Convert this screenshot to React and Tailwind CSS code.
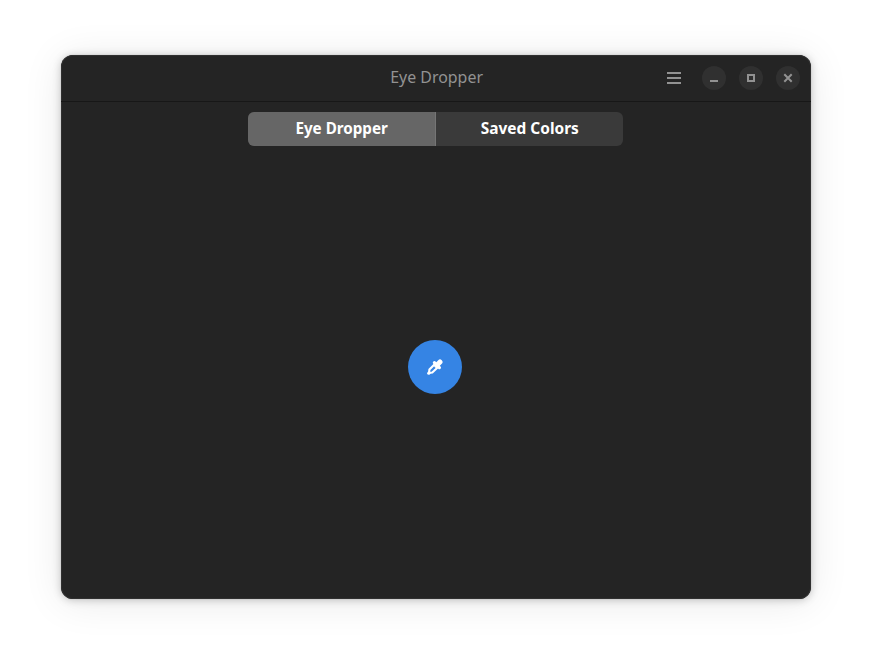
function Dropper() {
  return (
    <svg className="block size-4" viewBox="0 0 16 16" fill="none">
      <path d="M7.4 5.4 L2.4 10.6 L2 13.9 L5.3 13.5 L10.6 8.6" stroke="#fff" strokeWidth="2.1" strokeLinejoin="round" />
      <path d="M7.4 3.6 L12.4 8.6" stroke="#fff" strokeWidth="3.2" strokeLinecap="round" />
      <path d="M9.6 6.4 L13 3" stroke="#fff" strokeWidth="5" strokeLinecap="round" />
      <circle cx="1.8" cy="14.2" r="1.6" fill="#fff" />
    </svg>
  );
}

function WindowButton({ children }) {
  return (
    <button className="flex size-6 items-center justify-center rounded-full bg-[#303030]">
      <svg className="block size-2 overflow-visible" viewBox="0 0 8 8" fill="none" stroke="#929292" strokeWidth="2">
        {children}
      </svg>
    </button>
  );
}

export default function App() {
  return (
    <div className="h-[666px] w-[872px] overflow-hidden bg-white pl-[61px] pt-[55px] font-['Noto_Sans',sans-serif]">
      <div className="flex h-[544px] w-[750px] flex-col overflow-hidden rounded-[12px] bg-[#242424] shadow-[inset_0_0_0_1px_#303030,0_0_1px_rgba(0,0,0,0.3),0_1px_8px_rgba(0,0,0,0.22),0_3px_40px_rgba(0,0,0,0.09)]">
        <header className="grid h-[47px] shrink-0 grid-cols-[1fr_auto_1fr] border-b border-[#171717]">
          <div />
          <h1 className="flex h-[43px] w-[94px] items-center justify-center whitespace-nowrap pl-px text-[16px] text-[#929292]">
            <span className="scale-x-[0.995]">Eye Dropper</span>
          </h1>
          <div className="flex h-[46px] items-center justify-end pr-[11px]">
            <button className="mr-[21px] flex h-3 w-3.5 flex-col justify-between">
              <span className="h-0.5 w-full bg-[#929292]" />
              <span className="h-0.5 w-full bg-[#929292]" />
              <span className="h-0.5 w-full bg-[#929292]" />
            </button>
            <div className="flex gap-[13px]">
              <WindowButton><path d="M0 7H8" /></WindowButton>
              <WindowButton><path d="M1 1H7V7H1Z" /></WindowButton>
              <WindowButton><path d="M0.3 0.3L7.7 7.7M7.7 0.3L0.3 7.7" /></WindowButton>
            </div>
          </div>
        </header>
        <main className="flex flex-1 flex-col pt-2.5">
          <nav className="ml-[187px] flex h-[34px] w-[375px] shrink-0 overflow-hidden rounded-[6px] bg-[#3a3a3a] text-[16px] font-bold text-white">
            <button className="flex h-full w-[188px] items-center justify-center whitespace-nowrap border-r border-[#757575] bg-[#666666] pb-0.5">
              <span className="scale-x-[0.95]">Eye Dropper</span>
            </button>
            <button className="flex h-full flex-1 items-center justify-center whitespace-nowrap pb-0.5">
              <span className="scale-x-[0.965]">Saved Colors</span>
            </button>
          </nav>
          <section className="flex flex-1 items-center justify-center pb-[11px] pr-0.5">
            <button className="flex size-[54px] items-center justify-center rounded-full bg-[#3584e4]">
              <Dropper />
            </button>
          </section>
        </main>
      </div>
    </div>
  );
}
